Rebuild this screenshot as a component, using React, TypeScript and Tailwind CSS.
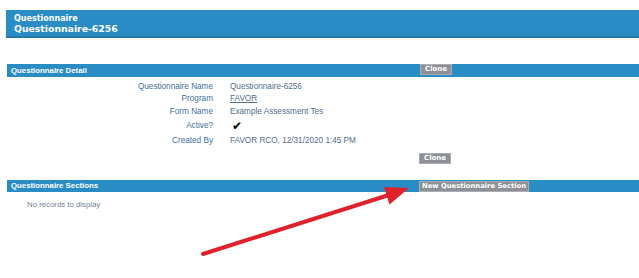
import React from "react";

const verdana = { fontFamily: '"DejaVu Sans", Verdana, sans-serif' };
const arial = { fontFamily: '"Liberation Sans", Arial, sans-serif' };

function Btn({ children, wide }: { children: React.ReactNode; wide?: boolean }) {
  return (
    <div
      className={`h-[11px] flex items-center bg-[#8d9197] border border-[#a9acb1] text-white font-bold leading-none whitespace-nowrap ${wide ? "px-[2px] text-[6.8px]" : "px-[4px] text-[7px]"}`}
      style={verdana}
    >
      {children}
    </div>
  );
}

export default function App() {
  const rows: [string, React.ReactNode, string][] = [
    ["Questionnaire Name", "Questionnaire-6256", "h-[12px]"],
    ["Program", <span className="underline">FAVOR</span>, "h-[13px]"],
    ["Form Name", "Example Assessment Tes", "h-[12px]"],
    ["Active?", <span className="text-black text-[12px] leading-none pl-[2px]" style={{ fontFamily: '"DejaVu Sans", sans-serif' }}>✔</span>, "h-[17px]"],
    ["Created By", "FAVOR RCO, 12/31/2020 1:45 PM", "h-[12px]"],
  ];
  return (
    <div className="relative w-[639px] h-[278px] bg-white overflow-hidden">
      <div className="pt-[10px] pl-[6px]">
        <div className="h-[28px] bg-[#2a8cc4] border-b-[2px] border-[#2479a8] pl-[8px] pt-[4px] text-white font-bold" style={verdana}>
          <div className="text-[8px] leading-[9px]">Questionnaire</div>
          <div className="text-[9.3px] leading-[12px]">Questionnaire-6256</div>
        </div>
      </div>

      <div className="mt-[26px] pl-[7px]">
        <div className="h-[13px] bg-[#2a8cc4] flex items-center">
          <div className="w-[413px] pl-[4px] text-white font-bold text-[7.8px] leading-none" style={arial}>
            Questionnaire Detail
          </div>
          <div className="self-start">
            <Btn>Clone</Btn>
          </div>
        </div>

        <div className="mt-[4px] text-[8.2px]" style={arial}>
          {rows.map(([l, v, h], i) => (
            <div key={i} className={`flex items-center ${h}`}>
              <div className="w-[206px] text-right text-[#3f6f9c] leading-none">{l}</div>
              <div className="pl-[17px] text-[#4f6d8c] leading-none">{v}</div>
            </div>
          ))}
        </div>

        <div className="mt-[6px] pl-[412px] flex">
          <Btn>Clone</Btn>
        </div>

        <div className="mt-[16px] h-[12px] bg-[#2a8cc4] flex items-center">
          <div className="w-[412px] pl-[4px] text-white font-bold text-[7.8px] leading-none" style={arial}>
            Questionnaire Sections
          </div>
          <Btn wide>New Questionnaire Section</Btn>
        </div>

        <div className="mt-[9px] pl-[20px] text-[7.8px] leading-none text-[#6f8296]" style={arial}>
          No records to display
        </div>
      </div>

      <svg className="absolute left-0 top-0" width="639" height="278" viewBox="0 0 639 278">
        <line x1="203" y1="254" x2="392" y2="194" stroke="#e0202b" strokeWidth="4" strokeLinecap="round" />
        <polygon points="409,188 389.5,204.5 384,187" fill="#e0202b" />
      </svg>
    </div>
  );
}
